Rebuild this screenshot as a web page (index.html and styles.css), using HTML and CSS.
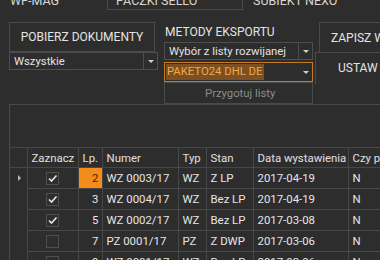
FILE: index.html
```html
<!DOCTYPE html>
<html lang="pl">
<head>
<meta charset="utf-8">
<title>Eksport</title>
<link rel="stylesheet" href="styles.css">
</head>
<body>
<div class="app">
  <div class="tabs">
    <div class="tab tab-active">WF-MAG</div>
    <div class="tab tab-boxed">PACZKI SELLO</div>
    <div class="tab tab-last">SUBIEKT NEXO</div>
  </div>

  <div class="toolbar">
    <div class="col col-left">
      <div class="btn btn-big btn-pobierz">POBIERZ DOKUMENTY</div>
      <div class="combo combo-left">
        <span class="combo-text">Wszystkie</span>
        <span class="combo-arrow"></span>
      </div>
    </div>
    <div class="col col-mid">
      <div class="label">METODY EKSPORTU</div>
      <div class="combo">
        <span class="combo-text">Wybór z listy rozwijanej</span>
        <span class="combo-arrow"></span>
      </div>
      <div class="combo combo-orange">
        <span class="combo-text"><span class="sel">PAKETO24 DHL DE</span></span>
        <span class="combo-arrow"></span>
      </div>
      <div class="btn btn-disabled">Przygotuj listy</div>
    </div>
    <div class="col col-right">
      <div class="btn btn-big btn-zapisz">ZAPISZ W</div>
      <div class="btn btn-big btn-ustaw">USTAW</div>
    </div>
  </div>

  <div class="grid">
    <div class="grid-top"></div>
    <table class="table">
      <colgroup>
        <col class="c-rh"><col class="c-chk"><col class="c-lp"><col class="c-num"><col class="c-typ"><col class="c-stan"><col class="c-data"><col class="c-czy">
      </colgroup>
      <thead>
        <tr>
          <th class="rh"></th>
          <th>Zaznacz</th>
          <th>Lp.</th>
          <th>Numer</th>
          <th>Typ</th>
          <th>Stan</th>
          <th>Data wystawienia</th>
          <th>Czy pobrano</th>
        </tr>
      </thead>
      <tbody>
        <tr>
          <td class="rh"><span class="marker"></span></td>
          <td class="chk"><span class="box"><svg viewBox="0 0 13 13" width="13" height="13"><path d="M3 6.5 L5.5 9 L10.5 3.5" fill="none" stroke="#e6e6e6" stroke-width="1.6"/></svg></span></td>
          <td class="lp lp-sel">2</td>
          <td>WZ 0003/17</td>
          <td>WZ</td>
          <td>Z LP</td>
          <td>2017-04-19</td>
          <td>N</td>
        </tr>
        <tr>
          <td class="rh"></td>
          <td class="chk"><span class="box"><svg viewBox="0 0 13 13" width="13" height="13"><path d="M3 6.5 L5.5 9 L10.5 3.5" fill="none" stroke="#e6e6e6" stroke-width="1.6"/></svg></span></td>
          <td class="lp">3</td>
          <td>WZ 0004/17</td>
          <td>WZ</td>
          <td>Bez LP</td>
          <td>2017-04-19</td>
          <td>N</td>
        </tr>
        <tr>
          <td class="rh"></td>
          <td class="chk"><span class="box"><svg viewBox="0 0 13 13" width="13" height="13"><path d="M3 6.5 L5.5 9 L10.5 3.5" fill="none" stroke="#e6e6e6" stroke-width="1.6"/></svg></span></td>
          <td class="lp">5</td>
          <td>WZ 0002/17</td>
          <td>WZ</td>
          <td>Bez LP</td>
          <td>2017-03-08</td>
          <td>N</td>
        </tr>
        <tr>
          <td class="rh"></td>
          <td class="chk"><span class="box"></span></td>
          <td class="lp">7</td>
          <td>PZ 0001/17</td>
          <td>PZ</td>
          <td>Z DWP</td>
          <td>2017-03-06</td>
          <td>N</td>
        </tr>
        <tr>
          <td class="rh"></td>
          <td class="chk"><span class="box"></span></td>
          <td class="lp">9</td>
          <td>WZ 0001/17</td>
          <td>WZ</td>
          <td>Bez LP</td>
          <td>2017-03-06</td>
          <td>N</td>
        </tr>
      </tbody>
    </table>
  </div>
</div>
</body>
</html>
```

FILE: styles.css
```css
* { box-sizing: border-box; }

html, body {
  margin: 0;
  padding: 0;
  background: #2d2d2d;
}

body {
  width: 380px;
  height: 260px;
  overflow: hidden;
  font-family: Roboto, "Liberation Sans", Arial, sans-serif;
  font-size: 11.3px;
  color: #e2e2e2;
}

.app {
  width: 380px;
  height: 260px;
  overflow: hidden;
}

/* Tabs */
.tabs {
  display: flex;
  height: 10px;
  overflow: hidden;
}
.tab {
  height: 15px;
  margin-top: -5px;
  font-size: 12.5px;
  line-height: 1;
  color: #d8d8d8;
  white-space: nowrap;
}
.tab-active {
  width: 107px;
  padding-left: 10px;
}
.tab-boxed {
  width: 136px;
  padding-left: 8px;
  border: 1px solid #4a4a4a;
  border-top: none;
}
.tab-last {
  padding-left: 10px;
}

/* Toolbar */
.toolbar {
  display: flex;
  margin-top: 12px;
  height: 82px;
}
.col { display: flex; flex-direction: column; }
.col-left {
  margin-left: 9px;
  width: 149px;
}
.col-mid {
  margin-left: 6px;
  width: 149px;
}
.col-right {
  flex: 1;
  min-width: 0;
}

.btn {
  border: 1px solid #4a4a4a;
  display: flex;
  align-items: center;
  justify-content: center;
  white-space: nowrap;
}
.btn-big {
  font-size: 12px;
  color: #e4e4e4;
  height: 30px;
}
.btn-pobierz {
  width: 146px;
}
.btn-zapisz {
  margin-left: 6px;
  width: 80px;
  justify-content: flex-start;
  padding-left: 11px;
  border-right: none;
  border-bottom: none;
}
.btn-ustaw {
  margin-left: 2px;
  width: 90px;
  height: 32px;
  justify-content: flex-start;
  padding-left: 22px;
  padding-bottom: 2px;
  border-right: none;
  border-bottom: none;
}
.btn-disabled {
  height: 22px;
  color: #8c8c8c;
  font-size: 11.3px;
  justify-content: flex-start;
  padding-left: 40px;
}

.label {
  height: 20px;
  font-size: 12px;
  color: #e4e4e4;
  padding-left: 1px;
  padding-top: 3px;
  white-space: nowrap;
}

.combo {
  display: flex;
  height: 18px;
  border: 1px solid #4e4e4e;
  align-items: stretch;
}
.combo-left { width: 149px; }
.combo + .combo { margin-top: 2px; }
.combo-text {
  flex: 1;
  display: flex;
  align-items: center;
  padding-left: 4px;
  white-space: nowrap;
  overflow: hidden;
}
.combo-arrow {
  width: 14px;
  border-left: 1px solid #4e4e4e;
  display: flex;
  align-items: center;
  justify-content: center;
}
.combo-arrow::after {
  content: "";
  width: 0;
  height: 0;
  border-left: 3px solid transparent;
  border-right: 3px solid transparent;
  border-top: 3px solid #d0d0d0;
}
.combo-orange {
  height: 20px;
  border-color: #c47a22;
}
.combo-orange .combo-text { padding-left: 1px; }
.combo-orange .combo-arrow { border-left-color: transparent; }
.sel {
  background: #7b5022;
  color: #f4a74a;
  padding: 1px 2px 1px 1px;
  line-height: 14px;
}

/* Grid */
.grid {
  margin-left: 9px;
  border-top: 1px solid #4a4a4a;
  border-left: 1px solid #4a4a4a;
  height: 160px;
}
.grid-top {
  height: 42px;
}
.table {
  border-collapse: collapse;
  table-layout: fixed;
  width: 431px;
}
.c-rh { width: 17px; }
.c-chk { width: 51px; }
.c-lp { width: 24px; }
.c-num { width: 76px; }
.c-typ { width: 28px; }
.c-stan { width: 47px; }
.c-data { width: 95px; }
.c-czy { width: 93px; }

.table th, .table td {
  border: 1px solid #474747;
  padding: 0 0 0 4px;
  text-align: left;
  white-space: nowrap;
  overflow: hidden;
  font-weight: normal;
  vertical-align: middle;
}
.table th {
  height: 20px;
  color: #e0e0e0;
  font-size: 11.4px;
}
.table td {
  height: 21px;
  color: #e6e6e6;
  font-size: 11.4px;
}
.table th:first-child, .table td:first-child {
  border-left: none;
}
.table td.rh {
  border-top: none;
  border-bottom: none;
}
.marker {
  display: block;
  margin-left: 4px;
  width: 0;
  height: 0;
  border-top: 3px solid transparent;
  border-bottom: 3px solid transparent;
  border-left: 3px solid #b8b8b8;
}
.table td.chk {
  text-align: center;
  padding: 0;
}
.box {
  display: inline-block;
  width: 13px;
  height: 13px;
  border: 1px solid #4f4f4f;
  vertical-align: middle;
}
.box svg {
  display: block;
  margin: -1px 0 0 -1px;
}
.table td.lp {
  text-align: right;
  padding: 0 3px 0 0;
}
.table td.lp-sel {
  background: #f48c1c;
  color: #4a2404;
}
```
